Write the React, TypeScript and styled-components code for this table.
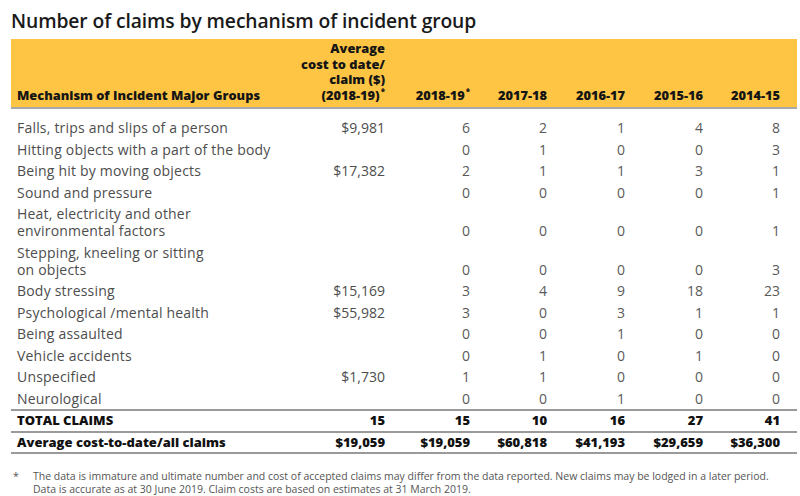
import React from "react";
import styled, { createGlobalStyle, css } from "styled-components";

type Row = {
  label: string[];
  cost?: string;
  values: number[];
};

const rows: Row[] = [
  { label: ["Falls, trips and slips of a person"], cost: "$9,981", values: [6, 2, 1, 4, 8] },
  { label: ["Hitting objects with a part of the body"], values: [0, 1, 0, 0, 3] },
  { label: ["Being hit by moving objects"], cost: "$17,382", values: [2, 1, 1, 3, 1] },
  { label: ["Sound and pressure"], values: [0, 0, 0, 0, 1] },
  { label: ["Heat, electricity and other", "environmental factors"], values: [0, 0, 0, 0, 1] },
  { label: ["Stepping, kneeling or sitting", "on objects"], values: [0, 0, 0, 0, 3] },
  { label: ["Body stressing"], cost: "$15,169", values: [3, 4, 9, 18, 23] },
  { label: ["Psychological /mental health"], cost: "$55,982", values: [3, 0, 3, 1, 1] },
  { label: ["Being assaulted"], values: [0, 0, 1, 0, 0] },
  { label: ["Vehicle accidents"], values: [0, 1, 0, 1, 0] },
  { label: ["Unspecified"], cost: "$1,730", values: [1, 1, 0, 0, 0] },
  { label: ["Neurological"], values: [0, 0, 1, 0, 0] },
];

const years = ["2018-19", "2017-18", "2016-17", "2015-16", "2014-15"];

const GlobalStyle = createGlobalStyle`
  body {
    margin: 0;
    background: #ffffff;
    font-family: "Open Sans", sans-serif;
  }
`;

const App = () => {
  return (
    <Page>
      <GlobalStyle />
      <Title>Number of claims by mechanism of incident group</Title>
      <Table>
        <colgroup>
          <col style={{ width: 284 }} />
          <col style={{ width: 90 }} />
          <col style={{ width: 85 }} />
          <col style={{ width: 77 }} />
          <col style={{ width: 78 }} />
          <col style={{ width: 78 }} />
          <col style={{ width: 94 }} />
        </colgroup>
        <thead>
          <tr>
            <HeadCell align="left">Mechanism of Incident Major Groups</HeadCell>
            <HeadCell>
              Average
              <br />
              cost to date/
              <br />
              claim ($)
              <br />
              (2018-19)<Star>*</Star>
            </HeadCell>
            {years.map((year, i) => (
              <HeadCell key={year}>
                {year}
                {i === 0 && <Star>*</Star>}
              </HeadCell>
            ))}
          </tr>
        </thead>
        <tbody>
          {rows.map((row, index) => (
            <BodyRow key={row.label[0]} first={index === 0}>
              <LabelCell>
                {row.label.map((line, i) => (
                  <React.Fragment key={line}>
                    {i > 0 && <br />}
                    {line}
                  </React.Fragment>
                ))}
              </LabelCell>
              <CostCell>{row.cost}</CostCell>
              {row.values.map((value, i) => (
                <NumberCell key={i}>{value}</NumberCell>
              ))}
            </BodyRow>
          ))}
          <TotalRow>
            <TotalCell align="left">TOTAL CLAIMS</TotalCell>
            <TotalCell>15</TotalCell>
            <TotalCell>15</TotalCell>
            <TotalCell>10</TotalCell>
            <TotalCell>16</TotalCell>
            <TotalCell>27</TotalCell>
            <TotalCell>41</TotalCell>
          </TotalRow>
          <TotalRow>
            <TotalCell align="left">Average cost-to-date/all claims</TotalCell>
            <TotalCell>$19,059</TotalCell>
            <TotalCell>$19,059</TotalCell>
            <TotalCell>$60,818</TotalCell>
            <TotalCell>$41,193</TotalCell>
            <TotalCell>$29,659</TotalCell>
            <TotalCell>$36,300</TotalCell>
          </TotalRow>
        </tbody>
      </Table>
      <Footnote>
        <FootStar>*</FootStar>
        <FootText>
          The data is immature and ultimate number and cost of accepted claims may differ from the data
          reported. New claims may be lodged in a later period.
          <br />
          Data is accurate as at 30 June 2019. Claim costs are based on estimates at 31 March 2019.
        </FootText>
      </Footnote>
    </Page>
  );
};

export default App;

const Page = styled.div`
  width: 800px;
  height: 496px;
  padding: 10px 0 0 11px;
  box-sizing: border-box;
  overflow: hidden;
`;

const Title = styled.h1`
  margin: 0 0 8px 0;
  font-family: "Open Sans", sans-serif;
  font-weight: 600;
  font-size: 19.3px;
  line-height: 21px;
  color: #1a1a1a;
  letter-spacing: -0.1px;
`;

const Table = styled.table`
  width: 786px;
  table-layout: fixed;
  border-collapse: collapse;
  border-spacing: 0;

  td:last-child,
  th:last-child {
    padding-right: 17px;
  }
  td:first-child,
  th:first-child {
    padding-left: 6px;
  }
`;

const HeadCell = styled.th<{ align?: "left" | "right" }>`
  background: #fec545;
  border-bottom: 2px solid #a9a9a9;
  height: 69px;
  box-sizing: border-box;
  padding: 0 0 4px 0;
  vertical-align: bottom;
  text-align: ${({ align }) => align ?? "right"};
  font-family: "Open Sans", sans-serif;
  font-weight: 800;
  font-size: 12.8px;
  line-height: 15.5px;
  color: #151515;
  white-space: nowrap;
`;

const Star = styled.span`
  display: inline-block;
  font-size: 8px;
  line-height: 8px;
  vertical-align: top;
  margin-left: 1px;
`;

const BodyRow = styled.tr<{ first?: boolean }>`
  ${({ first }) =>
    first &&
    css`
      td {
        padding-top: 10px;
      }
    `}
`;

const cellBase = css`
  padding: 2px 0 2.5px 0;
  font-size: 14px;
  line-height: 17px;
  letter-spacing: 0.2px;
  vertical-align: bottom;
  white-space: nowrap;
`;

const LabelCell = styled.td`
  ${cellBase}
  text-align: left;
  color: #4d4d4d;
`;

const CostCell = styled.td`
  ${cellBase}
  text-align: right;
  color: #4d4d4d;
  letter-spacing: 0;
`;

const NumberCell = styled.td`
  ${cellBase}
  text-align: right;
  color: #5a5a5a;
  letter-spacing: 0;
`;

const TotalRow = styled.tr`
  border-top: 2px solid #9a9a9a;
  &:last-child {
    border-bottom: 2px solid #9a9a9a;
  }
`;

const TotalCell = styled.td<{ align?: "left" | "right" }>`
  padding: 1px 0 1.5px 0;
  height: 17px;
  text-align: ${({ align }) => align ?? "right"};
  font-size: 13px;
  line-height: 17px;
  font-weight: 800;
  color: #111111;
  white-space: nowrap;
`;

const Footnote = styled.div`
  display: flex;
  margin-top: 16px;
  font-family: "Open Sans", sans-serif;
  font-size: 10.5px;
  line-height: 12.5px;
  color: #555555;
`;

const FootStar = styled.span`
  width: 22px;
  padding-left: 2px;
  box-sizing: border-box;
`;

const FootText = styled.div`
  flex: 1;
`;
